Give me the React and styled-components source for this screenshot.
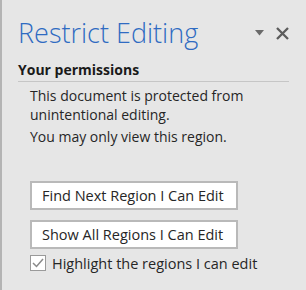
import React from "react";
import styled, { createGlobalStyle } from "styled-components";

const GlobalStyle = createGlobalStyle`
  html, body {
    margin: 0;
    padding: 0;
    background: #e6e6e6;
  }
`;

const Pane = styled.div`
  width: 306px;
  height: 290px;
  box-sizing: border-box;
  background: #e6e6e6;
  border-left: 2px solid #b4b4b4;
  padding: 14px 17px 0 16px;
  font-family: "Open Sans", "Liberation Sans", sans-serif;
  color: #262626;
`;

const Header = styled.div`
  display: flex;
  align-items: center;
  justify-content: space-between;
  height: 38px;
`;

const Title = styled.h1`
  margin: 0;
  font-family: "Open Sans", "Liberation Sans", sans-serif;
  font-weight: 300;
  font-size: 27px;
  color: #2f6bc2;
  line-height: 38px;
`;

const Controls = styled.div`
  display: flex;
  align-items: center;
  gap: 12px;
`;

const Section = styled.div`
  margin-top: 9px;
  font-weight: 700;
  font-size: 14px;
  line-height: 18px;
  color: #1a1a1a;
  padding-bottom: 2px;
  border-bottom: 1px solid #c6c6c6;
`;

const Body = styled.div`
  padding-left: 12px;
  padding-top: 4px;
  font-size: 14px;
  line-height: 19px;
`;

const Para = styled.p`
  margin: 0 0 3px 0;
`;

const Buttons = styled.div`
  display: flex;
  flex-direction: column;
  gap: 10px;
  margin-top: 35px;
`;

const Button = styled.button`
  width: 208px;
  height: 29px;
  box-sizing: border-box;
  border: 2px solid #b9b9b9;
  background: #fff;
  font-family: "Open Sans", "Liberation Sans", sans-serif;
  font-size: 14.5px;
  color: #262626;
  text-align: left;
  padding: 0 0 0 10px;
`;

const CheckRow = styled.label`
  display: flex;
  align-items: center;
  gap: 6px;
  margin-top: 6px;
  height: 16px;
  font-size: 14.5px;
`;

const Box = styled.span`
  width: 16px;
  height: 16px;
  box-sizing: border-box;
  border: 1px solid #9a9a9a;
  background: #fff;
  display: flex;
  align-items: center;
  justify-content: center;
`;

export default function App() {
  return (
    <>
      <GlobalStyle />
      <Pane>
        <Header>
          <Title>Restrict Editing</Title>
          <Controls>
            <svg width="9" height="6" viewBox="0 0 9 6">
              <path d="M0 0 H9 L4.5 5.5 Z" fill="#6a6a6a" />
            </svg>
            <svg width="13" height="13" viewBox="0 0 13 13">
              <path d="M1 1 L12 12 M12 1 L1 12" stroke="#5c5c5c" strokeWidth="2.3" />
            </svg>
          </Controls>
        </Header>
        <Section>Your permissions</Section>
        <Body>
          <Para>
            This document is protected from
            <br />
            unintentional editing.
          </Para>
          <Para>You may only view this region.</Para>
          <Buttons>
            <Button>Find Next Region I Can Edit</Button>
            <Button>Show All Regions I Can Edit</Button>
          </Buttons>
          <CheckRow>
            <Box>
              <svg width="12" height="10" viewBox="0 0 12 10">
                <path d="M1 5 L4.5 8.5 L11 1" fill="none" stroke="#8a8a8a" strokeWidth="1.5" />
              </svg>
            </Box>
            Highlight the regions I can edit
          </CheckRow>
        </Body>
      </Pane>
    </>
  );
}
